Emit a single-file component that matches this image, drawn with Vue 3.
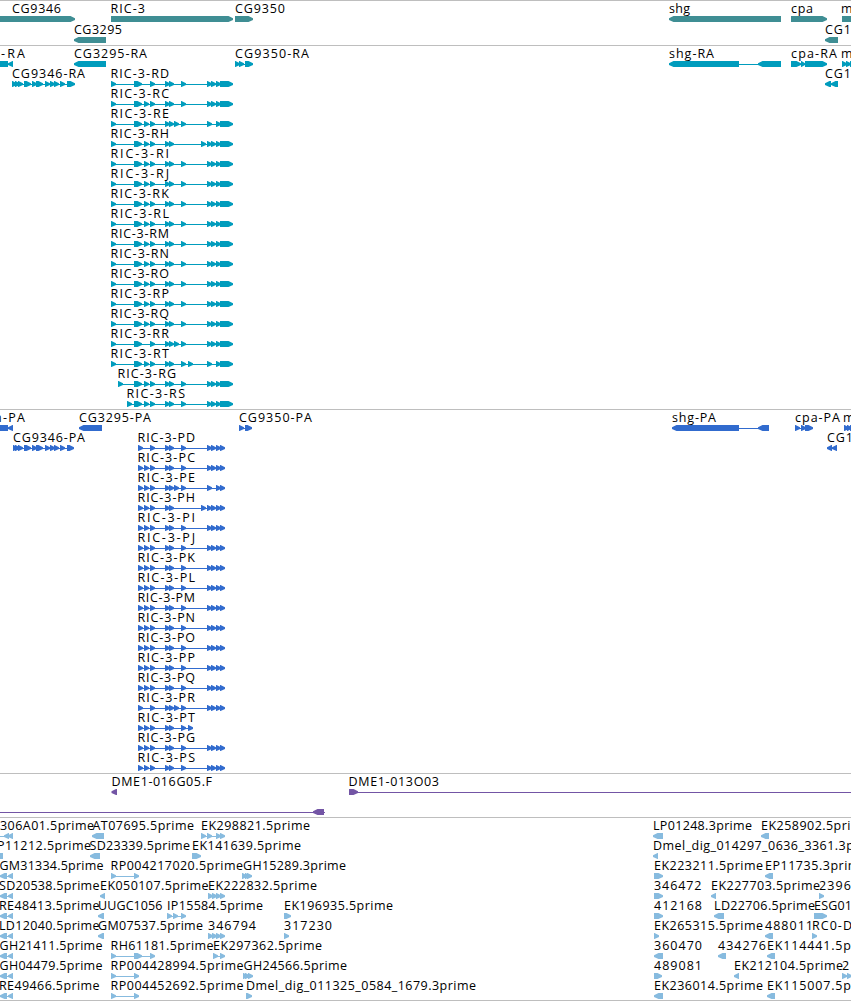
<template>
    <div class="browser">
        <section v-for="track in tracks" :key="track.name" class="track" :class="track.name">
            <svg class="track-canvas" width="851" :height="track.height">
                <g v-for="(row, r) in track.rows" :key="r" :transform="`translate(0 ${r * track.pitch - 1})`">
                    <g v-for="(item, i) in row" :key="i" class="feature">
                        <rect v-if="item.line" :x="item.line[0]" y="19" :width="item.line[1] - item.line[0]" height="1"
                            shape-rendering="crispEdges" />
                        <path v-for="(block, b) in item.blocks" :key="b" :d="arrow(block, item.dir)" />
                        <text v-if="item.label" :x="item.x" y="13" :textLength="item.end - item.x">{{ item.label }}</text>
                    </g>
                </g>
            </svg>
        </section>
    </div>
</template>

<script setup>
// one exon, ending in an arrow head in the direction of the strand
function arrow([start, end], dir) {
    const head = Math.min(5, end - start)
    if (dir > 0) {
        return `M${start} 16H${end - head + 0.5}L${end} 18.3V19.9L${end - head + 0.5} 22H${start}Z`
    }
    return `M${end} 16H${start + head - 0.5}L${start} 18.3V19.9L${start + head - 0.5} 22H${end}Z`
}

// blocks are [start, end], or only a start for the shortest exons
function feature(label, x, end, dir, blocks, line) {
    const list = blocks.map(b => (Array.isArray(b) ? b : [b, b + 5]))
    const span = list.length > 1 ? [list[0][0], list[list.length - 1][1]] : null
    return { label, x, end, dir, blocks: list, line: line || span }
}

const fwd = (label, x, end, ...blocks) => feature(label, x, end, 1, blocks)
const rev = (label, x, end, ...blocks) => feature(label, x, end, -1, blocks)

// RIC-3 isoforms
const tail = [207, 211, 216]

function ricRna(letter, middle, last = tail, start = 111) {
    return fwd('RIC-3-R' + letter, start - 0.5, start + 58, start, [134, 142], ...middle, ...last, [220, 233])
}

function ricCds(letter, middle, last = [...tail, 220]) {
    return fwd('RIC-3-P' + letter, 137.5, 195, 138, ...middle, ...last)
}

const base = [144, 150, 165, 169, 181]
const noSecond = [150, 165, 169, 181]
const extra = [144, 150, 165, 169, 174, 181]
const extraNoSecond = [150, 165, 169, 174, 181]

const genes = [
    [
        fwd('CG9346', 12, 61, [-10, 75]),
        fwd('RIC-3', 110.5, 145, [111, 233]),
        fwd('CG9350', 235, 285, [235, 253]),
        rev('shg', 669, 690, [669, 781]),
        fwd('cpa', 791, 813, [791, 827]),
        fwd('m', 841, 853, [842, 870])
    ],
    [
        rev('CG3295', 74, 122, [74, 106]),
        rev('CG1', 825, 851, [825, 838])
    ]
]

const transcripts = [
    [
        rev('-RA', 1, 25, [-10, 8], [8, 13]),
        rev('CG3295-RA', 74, 147, [74, 106]),
        fwd('CG9350-RA', 235, 309, 235, 239, [245, 253]),
        rev('shg-RA', 669, 714, [669, 739], [758, 781]),
        fwd('cpa-RA', 791, 837, [791, 801], [801, 805], [805, 827]),
        fwd('m', 841, 853, 842, 846, 850)
    ],
    [
        fwd('CG9346-RA', 12, 85, 12, 15, 18, [24, 31], 32, [36, 43], 45, 50, 54, 60, [67, 75]),
        ricRna('D', noSecond),
        rev('CG1', 825, 851, [825, 831], [831, 838])
    ],
    [ricRna('C', base)],
    [ricRna('E', extra, [207, 216])],
    [ricRna('H', [144, 150, 165, 169], [201, 207, 211, 216])],
    [ricRna('I', base)],
    [ricRna('J', base)],
    [ricRna('K', base)],
    [ricRna('L', base)],
    [ricRna('M', base)],
    [ricRna('N', base)],
    [ricRna('O', base)],
    [ricRna('P', base)],
    [ricRna('Q', base)],
    [ricRna('R', extraNoSecond)],
    [ricRna('T', [...base, 188], [207, 216])],
    [ricRna('G', base, tail, 118)],
    [ricRna('S', base, tail, 127)]
]

const proteins = [
    [
        rev('n-PA', -6, 25, [-10, 8], [8, 13]),
        rev('CG3295-PA', 79, 151, [79, 102]),
        fwd('CG9350-PA', 239, 312, 239, [245, 252]),
        rev('shg-PA', 672, 716, [672, 739], [758, 769]),
        fwd('cpa-PA', 795, 840, 795, 801, [805, 813]),
        fwd('m', 843, 855, 844, 847, 850)
    ],
    [
        fwd('CG9346-PA', 13, 85, 13, 15, 18, [24, 31], 32, [36, 43], 45, 50, 54, 60, [67, 74]),
        ricCds('D', noSecond),
        rev('CG1', 827, 853, 827, [832, 837])
    ],
    [ricCds('C', base)],
    [ricCds('E', extra, [207, 216, 220])],
    [ricCds('H', [144, 150, 165, 169], [201, 207, 211, 216, 220])],
    [ricCds('I', base)],
    [ricCds('J', base)],
    [ricCds('K', base)],
    [ricCds('L', base)],
    [ricCds('M', base)],
    [ricCds('N', base)],
    [ricCds('O', base)],
    [ricCds('P', base)],
    [ricCds('Q', base)],
    [ricCds('R', extraNoSecond)],
    [ricCds('T', [...base, 188], [])],
    [ricCds('G', base)],
    [ricCds('S', base)]
]

const clones = [
    [
        rev('DME1-016G05.F', 111.5, 212, [111.5, 117]),
        feature('DME1-013O03', 348.5, 439, 1, [[349, 358]], [349, 851])
    ],
    [feature('', 0, 0, -1, [[313, 324]], [0, 325])]
]

const ests = [
    [
        feature('306A01.5prime', 0, 94, -1, [4, 8], [0, 13]),
        rev('AT07695.5prime', 92.5, 194, [92, 104]),
        fwd('EK298821.5prime', 201, 310, 201, 207, 216, 220),
        rev('LP01248.3prime', 653, 752, [653, 663]),
        rev('EK258902.5prime', 761, 870, [761, 769])
    ],
    [
        rev('P11212.5prime', -3, 91, [-7, 3]),
        rev('SD23339.5prime', 89.5, 190, [90, 100]),
        fwd('EK141639.5prime', 192, 301, [192, 201]),
        rev('Dmel_dig_014297_0636_3361.3prime', 653, 882.5, 653)
    ],
    [
        rev('GM31334.5prime', -0.5, 103.5, [0, 7], 8),
        fwd('RP004217020.5prime', 110.5, 243, 111, 134),
        fwd('GH15289.3prime', 243, 346, 242, 245, 247),
        fwd('EK223211.5prime', 654, 763, [654, 663]),
        rev('EP11735.3prime', 765, 867, [765, 773])
    ],
    [
        rev('SD20538.5prime', -1, 99.5, [0, 7], 8),
        rev('EK050107.5prime', 100, 208.5, 100),
        fwd('EK222832.5prime', 208, 317, 208, 212, 216, 220),
        fwd('346472', 654, 701.5, [654, 663]),
        rev('EK227703.5prime', 711, 820, 711),
        fwd('2396', 819, 851, 819)
    ],
    [
        rev('RE48413.5prime', -1, 99.5, [0, 7], 8),
        rev('UUGC1056', 98, 162.5, [98, 104]),
        fwd('IP15584.5prime', 167, 263, 167, 173, 181),
        fwd('EK196935.5prime', 284, 393, [284, 291]),
        fwd('412168', 654, 702, [654, 663]),
        rev('LD22706.5prime', 714, 815, [714, 724]),
        fwd('ESG01', 814, 852, [814, 827])
    ],
    [
        rev('LD12040.5prime', -1, 99.5, [0, 7], 8),
        rev('GM07537.5prime', 98, 203, [98, 104]),
        fwd('346794', 208, 256, 208, 212, 216, 220),
        fwd('317230', 284, 332, 284),
        fwd('EK265315.5prime', 654, 763, 654),
        rev('488011', 765, 813, [765, 773]),
        fwd('RC0-D', 812, 852, 812)
    ],
    [
        rev('GH21411.5prime', -0.5, 102.5, [0, 7], 8),
        fwd('RH61181.5prime', 110.5, 213.5, 111, [134, 142], 150),
        fwd('EK297362.5prime', 213, 322, 213, 220),
        rev('360470', 654, 702, [654, 663]),
        rev('434276', 718, 766, [718, 726]),
        rev('EK114441.5p', 767, 851, [767, 775])
    ],
    [
        rev('GH04479.5prime', -0.5, 102.5, [0, 7], 8),
        fwd('RP004428994.5prime', 110.5, 243.5, 111, 134),
        fwd('GH24566.5prime', 243.5, 347, 243, 245, 248),
        fwd('489081', 654, 702, [654, 662]),
        rev('EK212104.5prime', 734, 843, 734),
        fwd('2', 842, 850, 842, 847)
    ],
    [
        rev('RE49466.5prime', -1, 99.5, [0, 7], 8),
        fwd('RP004452692.5prime', 110.5, 243.5, 111, 134),
        fwd('Dmel_dig_011325_0584_1679.3prime', 246, 476, [246, 252]),
        rev('EK236014.5prime', 654, 763, [654, 663]),
        rev('EK115007.5p', 767, 851, [767, 775])
    ]
]

const tracks = [
    { name: 'genes', height: 44, pitch: 21, rows: genes },
    { name: 'transcripts', height: 363, pitch: 20, rows: transcripts },
    { name: 'proteins', height: 363, pitch: 20, rows: proteins },
    { name: 'clones', height: 43, pitch: 20, rows: clones },
    { name: 'ests', height: 182, pitch: 20, rows: ests }
]
</script>

<style>
body {
    margin: 0;
    background: #fff;
}
</style>

<style scoped>
.browser {
    display: flex;
    flex-direction: column;
    width: 851px;
    overflow: hidden;
    border-bottom: 1px solid #bebebe;
}

.track {
    border-top: 1px solid #bebebe;
}

.track-canvas {
    display: block;
    overflow: hidden;
}

/* track colours */
.genes {
    fill: #3f8e94;
}

.transcripts {
    fill: #009cbd;
}

.proteins {
    fill: #316bce;
}

.clones {
    fill: #7355a5;
}

.ests {
    fill: #87bbdf;
}

.feature text {
    font-family: 'Open Sans', 'Noto Sans', sans-serif;
    font-size: 12.5px;
    fill: #000;
}
</style>
